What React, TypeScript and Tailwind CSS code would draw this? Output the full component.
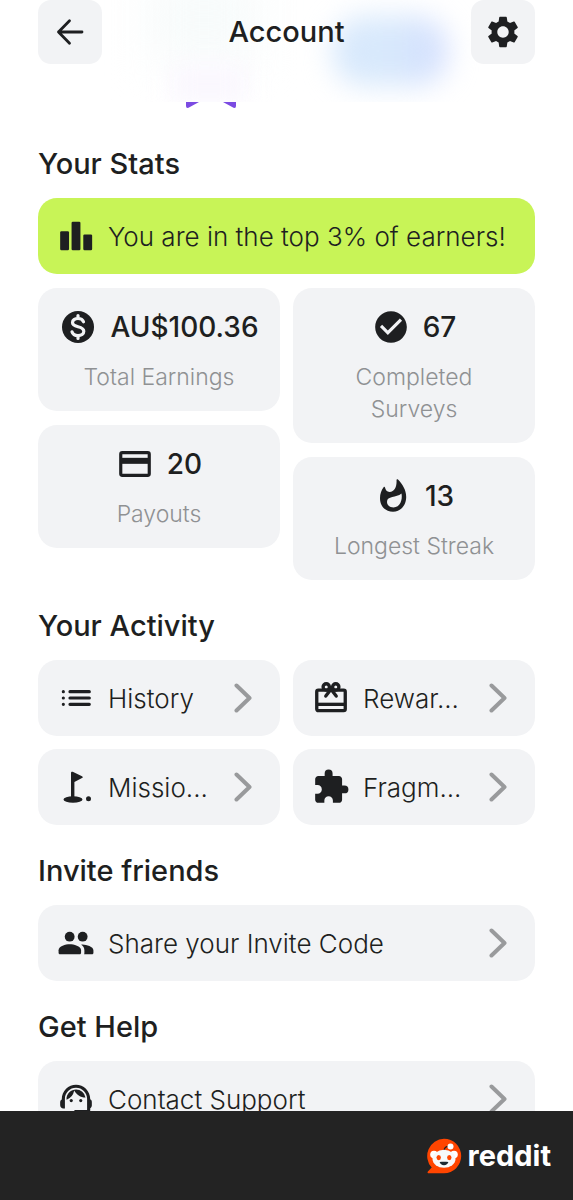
import React from "react";
import { MdCheckCircle, MdExtension, MdSettings, MdSupportAgent } from "react-icons/md";

function BarsIcon() {
  return (
    <svg viewBox="0 0 24 24" className="size-[38px] shrink-0" fill="currentColor" aria-hidden="true">
      <rect x="2" y="9" width="5.6" height="12" rx="0.8" />
      <rect x="9.2" y="3" width="5.6" height="18" rx="0.8" />
      <rect x="16.6" y="11" width="5.6" height="10" rx="0.8" />
    </svg>
  );
}

function DollarIcon() {
  return (
    <svg viewBox="0 0 38 38" className="size-[38px] shrink-0" aria-hidden="true">
      <circle cx="19" cy="19" r="16" fill="currentColor" />
      <path
        d="M24.5 13.8c-.7-2-2.7-3.3-5.5-3.3-3.2 0-5.500 1.600-5.500 4 0 5.800 11.300 2.600 11.300 8.800 0 2.700-2.500 4.300-5.800 4.300-3.100 0-5.300-1.500-6-3.800M19 7.500v3M19 27.500v3"
        fill="none"
        stroke="#f2f3f5"
        strokeWidth="3.2"
        strokeLinecap="round"
      />
    </svg>
  );
}

function FlameIcon() {
  return (
    <svg viewBox="0 0 38 38" className="size-[38px] shrink-0" aria-hidden="true">
      <path
        d="M22.5 2.8c.3-.9 1-.8 1.500-.2 4.500 4.800 8.200 10.400 8.200 17.400 0 8.400-5.700 14.800-13.200 14.800S6 29.200 6 21.200c0-4.300 1.400-8 3.600-10.900.5-.7 1.200-.5 1.400.3.6 2.700 2 4.400 4.500 4.400 5.500 0 7.500-6.200 7-12.200z"
        fill="currentColor"
      />
      <path d="M27.500 16.500c1.300 6.600-1.600 13.900-8 13.900-4 0-6.500-2.300-6.500-5.700 0-5.900 9.200-3.700 14.500-8.200z" fill="#f2f3f5" />
    </svg>
  );
}

function CardIcon() {
  return (
    <svg viewBox="0 0 24 24" className="size-[38px] shrink-0" fill="none" stroke="currentColor" aria-hidden="true">
      <rect x="3" y="4.8" width="18" height="14.4" rx="1" strokeWidth="2" />
      <path d="M3 10h18" strokeWidth="3.8" />
    </svg>
  );
}

function ListIcon() {
  return (
    <svg viewBox="0 0 24 24" className="size-[38px] shrink-0" fill="none" stroke="currentColor" strokeLinecap="round" aria-hidden="true">
      <path d="M8.2 8h12.2M8.2 12h12.2M8.2 16h12.2M4 8h.01M4 12h.01M4 16h.01" strokeWidth="2" />
    </svg>
  );
}

function GolfIcon() {
  return (
    <svg viewBox="0 0 38 38" className="size-[38px] shrink-0" fill="currentColor" aria-hidden="true">
      <ellipse cx="16" cy="31.5" rx="9.5" ry="3.2" />
      <circle cx="31.5" cy="30.8" r="2.5" />
      <path d="M14 31V4.800c0-1 .9-1.400 1.700-1l9.300 4.400c1 .5 1 1.400 0 1.900l-7.600 3.800V31z" />
    </svg>
  );
}

function GiftIcon() {
  return (
    <svg viewBox="0 0 24 24" className="size-[38px] shrink-0" fill="none" stroke="currentColor" strokeWidth="2.1" aria-hidden="true">
      <rect x="3" y="7" width="18" height="13" rx="1" />
      <path d="M3 16h18" />
      <circle cx="9" cy="5" r="2" />
      <circle cx="15" cy="5" r="2" />
      <path d="m8.700 10.800 3.300-4.300 3.300 4.300" strokeLinecap="round" />
    </svg>
  );
}

function PeopleIcon() {
  return (
    <svg viewBox="0 0 24 24" className="size-[38px] shrink-0" fill="currentColor" aria-hidden="true">
      <circle cx="8" cy="8" r="3.1" />
      <circle cx="16.2" cy="8" r="3.1" />
      <path d="M8 12.800c-2.500 0-7 1.200-7 3.700v1.800c0 .4.400.8.800.8h12.600c.4 0 .8-.4.800-.8v-1.800c0-2.500-4.700-3.700-7.200-3.700z" />
      <path d="M16.100 12.900c2.600.2 6.900 1.300 6.900 3.600v1.800c0 .4-.4.800-.8.800h-5.100c.1-.3.200-.5.200-.8v-1.800c0-1.500-.8-2.600-2-3.400.2-.2.500-.2.800-.2z" />
    </svg>
  );
}

function Chevron() {
  return (
    <svg viewBox="0 0 18 30" className="h-[30px] w-[18px] shrink-0 text-[#999a9c]" fill="none" stroke="currentColor" strokeWidth="4" strokeLinecap="round" aria-hidden="true">
      <path d="M2.5 2.5 15.5 15l-13 12.5" strokeLinejoin="round" />
    </svg>
  );
}

interface StatProps {
  icon: React.ReactNode;
  value: string;
  label: string;
}

function Stat({ icon, value, label }: StatProps) {
  return (
    <div className="rounded-[19px] bg-[#f2f3f5] px-8 pt-[19px] pb-[18px] text-center">
      <div className="-mx-4 flex h-10 items-center justify-center gap-[13px] text-[28px] font-medium">
        {icon}
        <span>{value}</span>
      </div>
      <p className="mt-[14px] text-[23px] leading-8 font-light text-[#8f9193]">{label}</p>
    </div>
  );
}

interface RowProps {
  icon: React.ReactNode;
  label: string;
}

function Row({ icon, label }: RowProps) {
  return (
    <button type="button" className="flex h-[76px] w-full items-center gap-[13px] rounded-[19px] bg-[#f2f3f5] pr-7 pl-[19px] text-left text-[26px] font-light">
      {icon}
      <span className="min-w-0 flex-1 whitespace-nowrap">{label}</span>
      <Chevron />
    </button>
  );
}

function Heading({ children }: { children: React.ReactNode }) {
  return <h2 className="mt-7 mb-4 text-[29px] leading-9 font-medium">{children}</h2>;
}

function Header() {
  return (
    <header className="relative h-[102px] shrink-0 overflow-hidden bg-white">
      {/* soft colour patches behind the title */}
      <div className="absolute -top-5 left-[26%] h-20 w-[110px] bg-[#f7fbfb] blur-xl" />
      <div className="absolute top-[64px] left-[30%] h-10 w-[74px] bg-[#faf7fe] blur-md" />
      <div className="absolute top-4 left-[58%] h-[70px] w-[116px] rounded-[32px] bg-linear-to-r from-[#d8e9fc] from-50% to-[#d3defe] blur-[14px]" />
      <div className="relative flex items-start justify-between px-[38px]">
        <button type="button" aria-label="Back" className="flex size-16 items-center justify-center rounded-[13px] bg-[#f2f3f5]">
          <svg viewBox="0 0 28 28" className="size-7" fill="none" stroke="currentColor" strokeWidth="2.8" strokeLinecap="round" strokeLinejoin="round" aria-hidden="true">
            <path d="M26 14H2.5M13.5 2.8 2.5 14l11 11.2" />
          </svg>
        </button>
        <h1 className="text-[29px] leading-16 font-medium">Account</h1>
        <button type="button" aria-label="Settings" className="flex size-16 items-center justify-center rounded-[13px] bg-[#f2f3f5]">
          <MdSettings className="size-[38px]" />
        </button>
      </div>
    </header>
  );
}

function RedditLogo() {
  return (
    <svg viewBox="0 0 36 36" className="size-9" aria-hidden="true">
      <path d="M18 .8a17.2 17.2 0 1 1 0 34.4H2.6c-1 0-1.400-1.100-.7-1.800l3.800-3.800A17.200 17.200 0 0 1 18 .8z" fill="#ff4500" />
      <circle cx="8" cy="16.5" r="3.8" fill="#fff" />
      <circle cx="28" cy="16.5" r="3.8" fill="#fff" />
      <path d="M18 12.500c.3-2.700 2-4.200 4.600-4.200" fill="none" stroke="#222" strokeWidth="1.3" />
      <circle cx="24.5" cy="8.5" r="3" fill="#fff" />
      <ellipse cx="18" cy="20.8" rx="11.5" ry="9" fill="#f6f9fb" />
      <ellipse cx="12.7" cy="19.6" rx="2.2" ry="2.6" fill="#ff4500" />
      <ellipse cx="23.3" cy="19.6" rx="2.2" ry="2.6" fill="#ff4500" />
      <path d="M13.600 24c2.800-.5 6-.5 8.800 0-.5 2-2.200 3.200-4.400 3.200s-3.900-1.200-4.400-3.200z" fill="#1b2a33" />
    </svg>
  );
}

export default function App() {
  return (
    <div className="flex h-screen flex-col bg-white font-['Inter',sans-serif] text-[#1e1f21]">
      <Header />
      <main className="min-h-0 flex-1 overflow-hidden px-[38px]">
        <svg viewBox="0 0 50 6" className="ml-[148px] h-[6px] w-[50px] text-[#7b4ae2]" fill="currentColor" aria-hidden="true">
          <path d="M0 0h13L2.5 5.8Q0 6.5 0 4z" />
          <path d="M50 0H37l10.5 5.8Q50 6.5 50 4z" />
        </svg>

        <section className="pt-[10px]">
          <Heading>Your Stats</Heading>
          <div className="flex h-[76px] items-center gap-[13px] rounded-[19px] bg-[#c8f457] px-[19px] text-[26px] font-light">
            <BarsIcon />
            <span className="whitespace-nowrap">You are in the top 3% of earners!</span>
          </div>
          <div className="mt-[14px] grid grid-cols-2 items-start gap-[13px]">
            <div className="grid gap-[14px]">
              <Stat icon={<DollarIcon />} value="AU$100.36" label="Total Earnings" />
              <Stat icon={<CardIcon />} value="20" label="Payouts" />
            </div>
            <div className="grid gap-[14px]">
              <Stat icon={<MdCheckCircle className="size-[38px]" />} value="67" label="Completed Surveys" />
              <Stat icon={<FlameIcon />} value="13" label="Longest Streak" />
            </div>
          </div>
        </section>

        <section>
          <Heading>Your Activity</Heading>
          <div className="grid grid-cols-2 gap-[13px]">
            <Row icon={<ListIcon />} label="History" />
            <Row icon={<GiftIcon />} label="Rewar..." />
            <Row icon={<GolfIcon />} label="Missio..." />
            <Row icon={<MdExtension className="size-[38px] shrink-0" />} label="Fragm..." />
          </div>
        </section>

        <section>
          <Heading>Invite friends</Heading>
          <Row icon={<PeopleIcon />} label="Share your Invite Code" />
        </section>

        <section>
          <Heading>Get Help</Heading>
          <Row icon={<MdSupportAgent className="size-[38px] shrink-0" />} label="Contact Support" />
        </section>
      </main>
      <footer className="flex h-[89px] shrink-0 items-center justify-end gap-[6px] bg-[#232323] pr-[22px] text-white">
        <RedditLogo />
        <span className="text-[29px] leading-9 font-bold">reddit</span>
      </footer>
    </div>
  );
}
